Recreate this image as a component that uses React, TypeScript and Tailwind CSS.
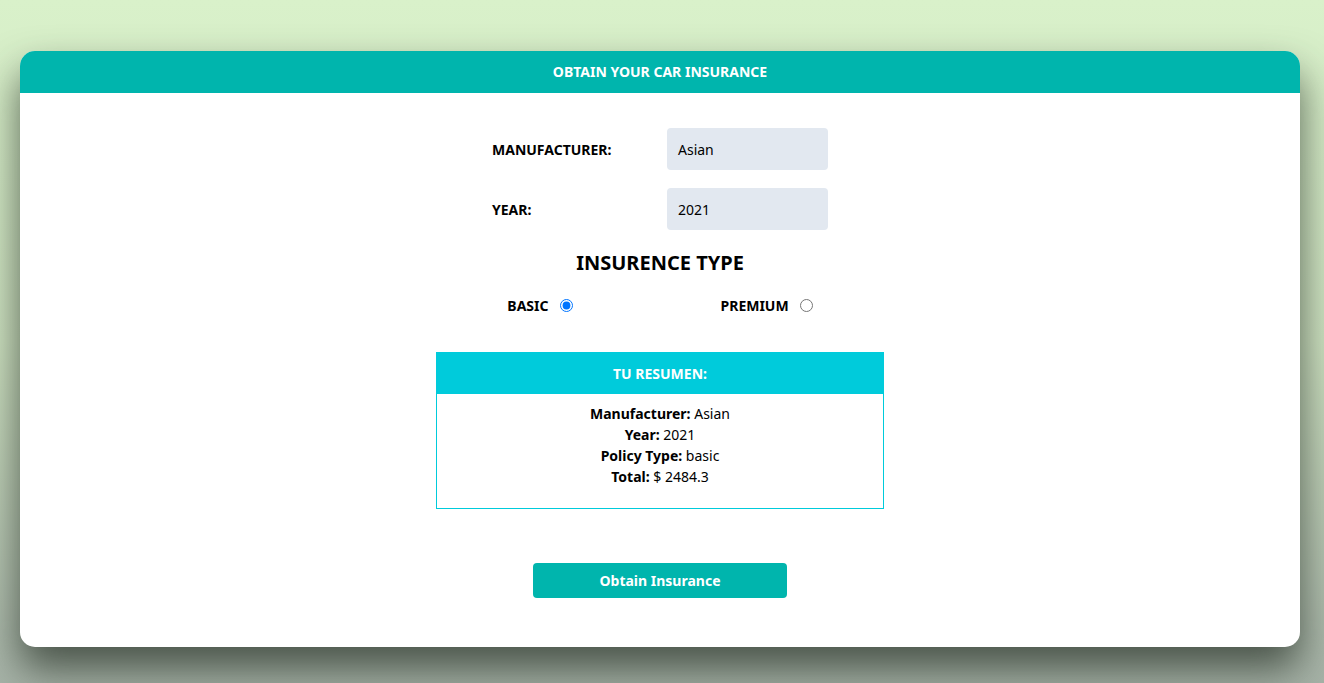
import React, { useState } from 'react';

export default function App() {
  const [plan, setPlan] = useState('basic');

  return (
    <div
      className="min-h-screen bg-gradient-to-b from-[#d9f1ca] via-[#cfe3c2] to-[#a7b3a8] pt-[51px] pl-5 pr-6 pb-9"
      style={{ fontFamily: '"Noto Sans", "Open Sans", sans-serif' }}
    >
      <div className="bg-white rounded-[15px] overflow-hidden shadow-[0_22px_40px_rgba(40,50,40,0.75)]">
        {/* Header */}
        <div className="h-[42px] bg-[#00b5ad] flex items-center justify-center pb-[1px]">
          <h1 className="text-white text-[14px] font-bold">OBTAIN YOUR CAR INSURANCE</h1>
        </div>

        <div className="flex flex-col items-center pt-[35px] pb-[49px]">
          {/* Form */}
          <div className="w-[336px] flex flex-col gap-[18px]">
            <div className="flex items-center">
              <label className="w-[175px] text-[14px] font-bold text-black">MANUFACTURER:</label>
              <div className="w-[161px] h-[42px] bg-[#e2e8f0] rounded-[4px] flex items-center px-[11px] text-[14px] text-black">
                Asian
              </div>
            </div>
            <div className="flex items-center">
              <label className="w-[175px] text-[14px] font-bold text-black">YEAR:</label>
              <div className="w-[161px] h-[42px] bg-[#e2e8f0] rounded-[4px] flex items-center px-[11px] text-[14px] text-black">
                2021
              </div>
            </div>
          </div>

          <h2 className="mt-[19px] text-[20px] leading-[28px] font-bold text-black">INSURENCE TYPE</h2>

          <div className="mt-[18px] flex items-center gap-[148px]">
            <label className="flex items-center text-[14px] font-bold text-black">
              BASIC
              <input
                type="radio"
                name="plan"
                checked={plan === 'basic'}
                onChange={() => setPlan('basic')}
                className="ml-[11px] w-[13px] h-[13px]"
              />
            </label>
            <label className="flex items-center text-[14px] font-bold text-black">
              PREMIUM
              <input
                type="radio"
                name="plan"
                checked={plan === 'premium'}
                onChange={() => setPlan('premium')}
                className="ml-[11px] w-[13px] h-[13px]"
              />
            </label>
          </div>

          {/* Summary */}
          <div className="mt-[36px] w-[448px] border border-[#00cbdb]">
            <div className="h-[41px] bg-[#00cbdb] flex items-center justify-center">
              <span className="text-white text-[14px] font-bold">TU RESUMEN:</span>
            </div>
            <div className="pt-[9px] pb-[21px] text-center text-[14px] leading-[21px] text-black">
              <p><span className="font-bold">Manufacturer:</span> Asian</p>
              <p><span className="font-bold">Year:</span> 2021</p>
              <p><span className="font-bold">Policy Type:</span> {plan}</p>
              <p><span className="font-bold">Total:</span> $ 2484.3</p>
            </div>
          </div>

          <button className="mt-[54px] w-[254px] h-[35px] bg-[#00b5ad] rounded-[4px] text-white text-[14px] font-bold">
            Obtain Insurance
          </button>
        </div>
      </div>
    </div>
  );
}
